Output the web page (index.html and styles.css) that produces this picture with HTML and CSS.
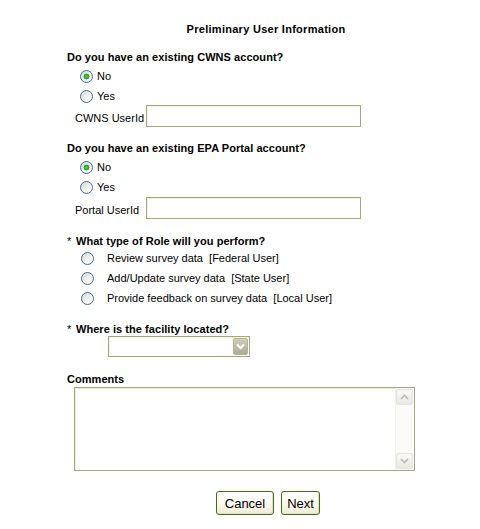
FILE: index.html
```html
<!DOCTYPE html>
<html>
<head>
<meta charset="utf-8">
<title>Preliminary User Information</title>
<link rel="stylesheet" href="styles.css">
</head>
<body>
<form class="page">
  <div class="title">Preliminary User Information</div>

  <div class="q q1">Do you have an existing CWNS account?</div>
  <label class="opt"><input type="radio" name="cwns" checked><span>No</span></label>
  <label class="opt"><input type="radio" name="cwns"><span>Yes</span></label>
  <div class="field f1"><span class="flabel">CWNS UserId</span><input class="text" type="text"></div>

  <div class="q q2">Do you have an existing EPA Portal account?</div>
  <label class="opt"><input type="radio" name="epa" checked><span>No</span></label>
  <label class="opt"><input type="radio" name="epa"><span>Yes</span></label>
  <div class="field"><span class="flabel">Portal UserId</span><input class="text" type="text"></div>

  <div class="q q3"><span class="star">*</span>What type of Role will you perform?</div>
  <div class="roles">
    <label class="role"><input type="radio" name="role"><span>Review survey data&nbsp; [Federal User]</span></label>
    <label class="role"><input type="radio" name="role"><span>Add/Update survey data&nbsp; [State User]</span></label>
    <label class="role"><input type="radio" name="role"><span>Provide feedback on survey data&nbsp; [Local User]</span></label>
  </div>

  <div class="q q4"><span class="star">*</span>Where is the facility located?</div>
  <div class="selrow">
    <div class="select">
      <span class="arrow"><svg width="9" height="7" viewBox="0 0 9 7"><path d="M1 1.5 L4.5 5 L8 1.5" fill="none" stroke="#fff" stroke-width="2"/></svg></span>
    </div>
  </div>

  <div class="q q5">Comments</div>
  <div class="comments">
    <textarea class="area"></textarea>
    <div class="sbar">
      <span class="sbtn"><svg width="9" height="6" viewBox="0 0 9 6"><path d="M1 5 L4.5 1.5 L8 5" fill="none" stroke="#b9b9b4" stroke-width="1.6"/></svg></span>
      <span class="strack"></span>
      <span class="sbtn"><svg width="9" height="6" viewBox="0 0 9 6"><path d="M1 1 L4.5 4.5 L8 1" fill="none" stroke="#b9b9b4" stroke-width="1.6"/></svg></span>
    </div>
  </div>

  <div class="buttons">
    <button type="button" class="btn cancel">Cancel</button>
    <button type="button" class="btn next">Next</button>
  </div>
</form>
</body>
</html>
```
FILE: styles.css
```css
html, body {
  margin: 0;
  padding: 0;
  background: #fff;
}
body {
  width: 480px;
  height: 529px;
  overflow: hidden;
  font-family: "Liberation Sans", Arial, sans-serif;
  font-size: 11px;
  color: #000;
}
.page {
  padding: 19px 0 0 67px;
}
.title {
  height: 20px;
  line-height: 20px;
  font-weight: bold;
  text-align: center;
  margin-left: -15px;
  letter-spacing: 0.28px;
}
.q {
  font-weight: bold;
  height: 18px;
  line-height: 18px;
  letter-spacing: 0.05px;
}
.q1 { margin-top: 9px; }
.q2 { margin-top: 12px; }
.q3 { margin-top: 14px; height: 16px; line-height: 16px; }
.q4 { margin-top: 13px; height: 16px; line-height: 16px; }
.q5 { margin-top: 14px; height: 16px; line-height: 16px; }
.star {
  font-weight: normal;
  display: inline-block;
  width: 9px;
}
.opt {
  display: flex;
  align-items: center;
  height: 20px;
  padding-left: 13px;
  gap: 4px;
}
input[type=radio] {
  appearance: none;
  -webkit-appearance: none;
  width: 13px;
  height: 13px;
  margin: 0;
  box-sizing: border-box;
  border: 1px solid #3f6c95;
  border-radius: 50%;
  background: linear-gradient(135deg, #d8d8d0 0%, #f4f4f0 60%, #ffffff 100%);
  flex: none;
}
input[type=radio]:checked {
  background:
    radial-gradient(circle at 50% 50%, #55d855 0, #2ea82e 2px, #1f8f1f 2.6px, rgba(255,255,255,0) 3.2px),
    linear-gradient(135deg, #d8d8d0 0%, #f4f4f0 60%, #ffffff 100%);
}
.field {
  display: flex;
  align-items: center;
  height: 22px;
  padding-left: 8px;
}
.f1 { margin-top: -1px; }
.flabel {
  width: 71px;
  padding-top: 3px;
}
.text {
  width: 215px;
  height: 22px;
  box-sizing: border-box;
  margin: 0;
  border: 1px solid #a7a47f;
  box-shadow: inset 1px 1px 0 #eef6dc;
  background: #fff;
  outline: none;
}
.roles {
  margin-top: -1px;
}
.role {
  display: flex;
  align-items: center;
  height: 20px;
  padding-left: 14px;
  gap: 13px;
}
.selrow {
  margin-top: -1px;
  padding-left: 41px;
}
.select {
  width: 142px;
  height: 21px;
  box-sizing: border-box;
  border: 1px solid #a7a47f;
  box-shadow: inset 1px 1px 0 #eef6dc;
  background: #fff;
  display: flex;
  justify-content: flex-end;
  align-items: center;
  padding-right: 1px;
}
.arrow {
  width: 15px;
  height: 17px;
  box-sizing: border-box;
  border: 1px solid #b3b197;
  border-radius: 2px;
  background: linear-gradient(180deg, #cfcdb6 0%, #aeac92 100%);
  display: flex;
  align-items: center;
  justify-content: center;
}
.comments {
  margin: 0 0 0 7px;
  width: 341px;
  height: 84px;
  box-sizing: border-box;
  border: 1px solid #a7a47f;
  box-shadow: inset 1px 1px 0 #e6f2cc;
  display: flex;
  background: #fff;
}
.area {
  flex: 1;
  border: none;
  margin: 0;
  padding: 0;
  resize: none;
  outline: none;
  background: transparent;
}
.sbar {
  width: 17px;
  display: flex;
  flex-direction: column;
  background: #fbfbf9;
  border-left: 1px solid #f1f1ec;
  padding: 1px 1px 1px 0;
}
.sbtn {
  height: 16px;
  box-sizing: border-box;
  border: 1px solid #e4e4de;
  border-radius: 2px;
  background: linear-gradient(180deg, #f8f8f5, #e9e9e4);
  display: flex;
  align-items: center;
  justify-content: center;
}
.strack {
  flex: 1;
}
.buttons {
  margin-top: 20px;
  margin-left: -11px;
  display: flex;
  justify-content: center;
  gap: 7px;
}
.btn {
  height: 24px;
  box-sizing: border-box;
  margin: 0;
  padding: 0;
  border: 1px solid #3e6e12;
  border-radius: 3px;
  background: linear-gradient(180deg, #ffffff 0%, #fbf9f0 50%, #efebd8 100%);
  box-shadow: inset -1px -1px 0 #e3dfc8;
  font-family: "Liberation Sans", Arial, sans-serif;
  font-size: 13px;
  color: #000;
}
.cancel { width: 58px; }
.next { width: 39px; }
```
